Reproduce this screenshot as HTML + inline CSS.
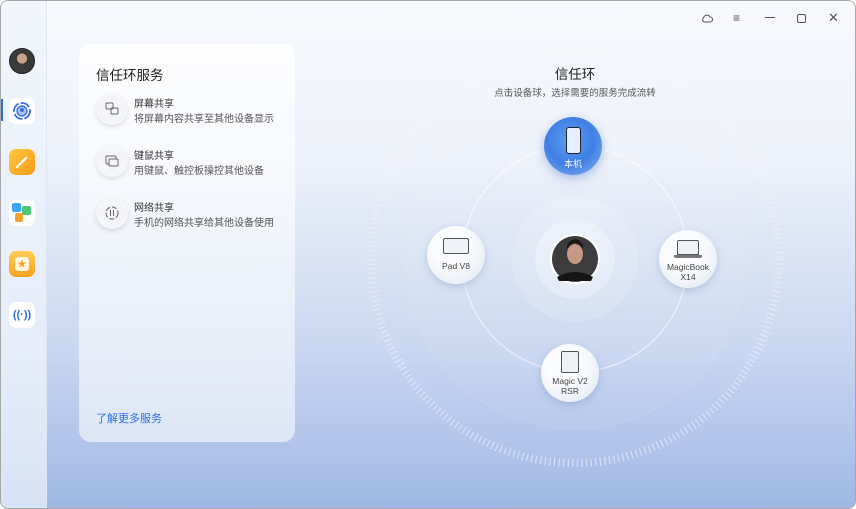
<!DOCTYPE html>
<html><head><meta charset="utf-8"><style>
*{margin:0;padding:0;box-sizing:border-box}
body{width:856px;height:509px;overflow:hidden;font-family:"Liberation Sans","Noto Sans CJK SC",sans-serif;background:#fff}
.win{position:absolute;left:0;top:0;width:856px;height:509px;border:1px solid #a8a8a8;border-radius:8px;overflow:hidden;background:linear-gradient(180deg,#f7f9fd 0%,#eef2fa 30%,#c7d6f0 70%,#9fb8e3 100%)}
.side{position:absolute;left:0;top:0;width:46px;height:509px;background:linear-gradient(180deg,#f2f6fc,#e5edf9 70%,#d6e2f5);border-right:1px solid #dfe6f2}
.ic{position:absolute;left:8px;width:26px;height:26px;border-radius:7px;background:#fff;display:flex;align-items:center;justify-content:center}
.card{position:absolute;left:78px;top:43px;width:216px;height:398px;border-radius:12px;background:linear-gradient(180deg,rgba(255,255,255,.8),rgba(236,241,250,.75));}
.card h2{position:absolute;left:17px;top:20px;font-size:13.5px;font-weight:normal;color:#222}
.item{position:absolute;left:17px;width:200px;height:34px}
.item .c{position:absolute;left:0;top:0;width:32px;height:32px;border-radius:50%;background:#f4f5f8;box-shadow:0 2px 5px rgba(0,0,0,.12);display:flex;align-items:center;justify-content:center}
.item .t{position:absolute;left:38px;top:2px;font-size:10px;color:#333}
.item .s{position:absolute;left:38px;top:17px;font-size:10px;color:#555}
.more{position:absolute;left:17px;top:366px;font-size:11px;color:#2f6ee0}
.node{position:absolute;width:58px;height:58px;border-radius:50%;background:radial-gradient(circle at 40% 35%,#fbfcfe 35%,#dfe6f3 100%);box-shadow:0 3px 8px rgba(80,110,170,.25);text-align:center;font-size:8.5px;color:#444;line-height:10px}
.tb{position:absolute;top:12px;color:#555;font-size:12px}
</style></head><body><div class="win">
<div class="side">
 <div style="position:absolute;left:8px;top:47px;width:26px;height:26px;border-radius:50%;background:radial-gradient(circle at 50% 40%,#c9a38c 0 26%,#3a3a3a 28%);border:1px solid #222"></div>
 <div style="position:absolute;left:0;top:98px;width:2px;height:22px;background:#2f6ee0"></div>
 <div class="ic" style="top:97px"><svg width="20" height="20" viewBox="0 0 20 20"><circle cx="10" cy="10" r="8" fill="none" stroke="#3b6fe6" stroke-width="1.8" stroke-dasharray="10 2"/><circle cx="10" cy="10" r="5" fill="#aac2f5" stroke="#3b6fe6" stroke-width="1.4"/><circle cx="10" cy="9" r="2" fill="#3b6fe6"/></svg></div>
 <div class="ic" style="top:148px;background:linear-gradient(135deg,#ffc740,#f99a1b)"><svg width="16" height="16"><path d="M3 13 L12 4" stroke="#fff" stroke-width="2.2" stroke-linecap="round"/></svg></div>
 <div class="ic" style="top:199px"><div style="position:absolute;left:3px;top:3px;width:9px;height:9px;background:#3aa5f5;border-radius:2px"></div><div style="position:absolute;left:13px;top:6px;width:9px;height:9px;background:#4cc77a;border-radius:2px"></div><div style="position:absolute;left:6px;top:13px;width:8px;height:9px;background:#f7a130;border-radius:2px"></div></div>
 <div class="ic" style="top:250px;background:linear-gradient(#ffcd55,#f9a11f)"><div style="width:14px;height:14px;background:#fff6df;border-radius:3px;color:#f6a21e;font-size:9px;text-align:center;line-height:14px">★</div></div>
 <div class="ic" style="top:301px;color:#2f6ee0;font-size:11px;font-weight:bold">((·))</div>
</div>
<div class="tb" style="left:700px"><svg width="12" height="12" viewBox="0 0 12 12"><path d="M3 9 A3 3 0 0 1 3 4 A3.3 3.3 0 0 1 9 4 A2.5 2.5 0 0 1 9 9 Z" fill="none" stroke="#555" stroke-width="1"/></svg></div>
<div class="tb" style="left:732px;top:10px">≡</div>
<div class="tb" style="left:764px;top:16px;width:10px;height:1px;background:#555"></div>
<div class="tb" style="left:796px;top:13px;width:9px;height:9px;border:1px solid #555;border-radius:2px"></div>
<div class="tb" style="left:827px;top:9px;font-size:13px">✕</div>

<div class="card">
 <h2>信任环服务</h2>
 <div class="item" style="top:49px"><div class="c"><svg width="14" height="14"><rect x="1" y="1" width="7" height="6" rx="1" fill="none" stroke="#666"/><rect x="6" y="6" width="7" height="6" rx="1" fill="none" stroke="#666"/></svg></div><div class="t">屏幕共享</div><div class="s">将屏幕内容共享至其他设备显示</div></div>
 <div class="item" style="top:101px"><div class="c"><svg width="14" height="14"><rect x="1" y="2" width="10" height="8" rx="1" fill="none" stroke="#666"/><rect x="4" y="5" width="9" height="7" rx="1" fill="#f6f7fa" stroke="#666"/></svg></div><div class="t">键鼠共享</div><div class="s">用键鼠、触控板操控其他设备</div></div>
 <div class="item" style="top:153px"><div class="c"><svg width="14" height="14"><circle cx="7" cy="7" r="6" fill="none" stroke="#666" stroke-dasharray="5 2"/><path d="M5.5 4v6M8.5 4v6" stroke="#666"/></svg></div><div class="t">网络共享</div><div class="s">手机的网络共享给其他设备使用</div></div>
 <div class="more">了解更多服务</div>
</div>

<div style="position:absolute;left:0;top:62px;width:1148px;text-align:center;font-size:13.5px;color:#222">信任环</div>
<div style="position:absolute;left:0;top:84px;width:1148px;text-align:center;font-size:9.5px;color:#555">点击设备球，选择需要的服务完成流转</div>

<svg style="position:absolute;left:0;top:0" width="856" height="509">
 <defs><linearGradient id="tg" x1="0" y1="0" x2="0" y2="1"><stop offset="0" stop-color="#fff" stop-opacity=".15"/><stop offset="1" stop-color="#fff" stop-opacity=".6"/></linearGradient></defs>
 <circle cx="574" cy="258" r="204" fill="none" stroke="url(#tg)" stroke-width="8" stroke-dasharray="1 3.6"/>
 <circle cx="574" cy="258" r="170" fill="rgba(255,255,255,.04)" stroke="rgba(255,255,255,.12)"/>
 <circle cx="574" cy="258" r="113" fill="none" stroke="rgba(255,255,255,.7)" stroke-width="1"/>
 <circle cx="574" cy="258" r="63" fill="rgba(255,255,255,.15)"/>
 <circle cx="574" cy="258" r="40" fill="rgba(255,255,255,.3)"/>
 <circle cx="574" cy="258" r="25" fill="#fff"/>
 <circle cx="574" cy="258" r="23" fill="#3c3c3c"/>
 <ellipse cx="574" cy="253" rx="8" ry="10" fill="#c49a84"/>
 <path d="M566 248 Q574 236 582 248 L582 244 Q574 232 566 244Z" fill="#1e1a18"/>
 <path d="M556 276 Q574 266 592 276 L590 280 L558 280Z" fill="#151515"/>
</svg>

<div class="node" style="left:543px;top:116px;background:radial-gradient(circle at 45% 40%,#5e9ef0 0%,#3f7fe4 50%,#8ab4f2 100%);color:#fff;box-shadow:0 3px 10px rgba(40,90,200,.35)">
 <div style="margin:10px auto 0;width:15px;height:27px;border:1.5px solid #223;border-radius:3px;background:#e6efff"></div><div style="margin-top:5px;font-size:9px">本机</div></div>
<div class="node" style="left:426px;top:225px"><div style="margin:12px auto 0;width:26px;height:16px;border:1.5px solid #555;border-radius:2px;background:#eef2f7"></div><div style="margin-top:7px">Pad V8</div></div>
<div class="node" style="left:658px;top:229px"><div style="margin:10px auto 0;width:22px;height:15px;border:1.5px solid #555;border-radius:2px 2px 0 0;background:#eef2f7"></div><div style="margin:0 auto;width:28px;height:3px;background:#777;border-radius:0 0 2px 2px"></div><div style="margin-top:4px">MagicBook<br>X14</div></div>
<div class="node" style="left:540px;top:343px"><div style="margin:7px auto 0;width:18px;height:22px;border:1.5px solid #555;border-radius:2px;background:#eef2f7"></div><div style="margin-top:3px">Magic V2<br>RSR</div></div>
</div></body></html>
